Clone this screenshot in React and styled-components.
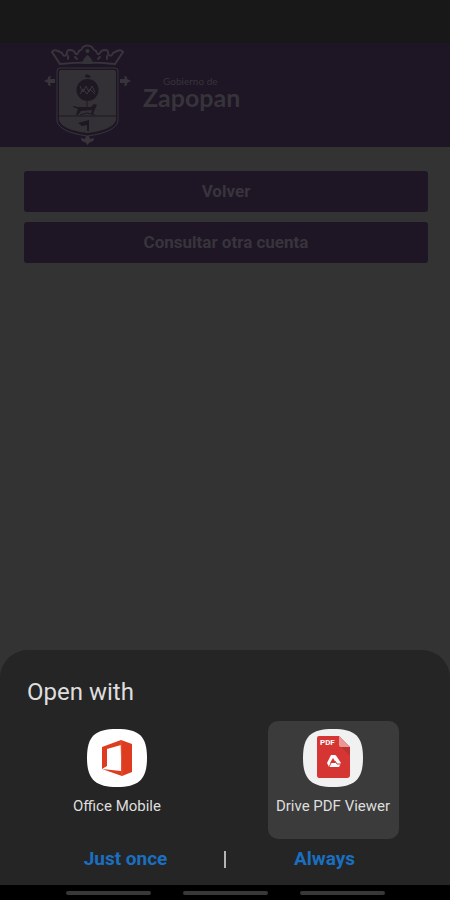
import React from 'react';
import styled, { createGlobalStyle } from 'styled-components'

const GlobalStyle = createGlobalStyle`
* {
  box-sizing: border-box;
}
body {
  margin: 0;
  background: #333333;
  font-family: Roboto, sans-serif;
}
button {
  margin: 0;
  padding: 0;
  border: 0;
  background: none;
  font-family: inherit;
  cursor: pointer;
}
`

const Crest = () => (
  <svg width="88" height="102" viewBox="0 0 88 102" fill="none" aria-hidden="true">
    {/* crown */}
    <g stroke="#38343c" strokeWidth="2" strokeLinejoin="round" strokeLinecap="round">
      <path d="M8 8 L16 20 M79 8 L71 20" />
      <path d="M8 8 Q10 5 14 7 L18 9 Q20 14 23 10 Q22 6 26 6 Q30 6 31 9 Q33 12 35 7" />
      <path d="M79 8 Q77 5 73 7 L69 9 Q67 14 64 10 Q65 6 61 6 Q57 6 56 9 Q54 12 52 7" />
      <path d="M35 7 Q38 6 39 3 Q43.500 0 48 3 Q49 6 52 7" />
      <path d="M16 20 Q43.500 17 71 20" />
      <path d="M24 12 V15 M63 12 V15 M31 13 L33 15 M56 13 L54 15" />
    </g>
    <path d="M38 20 Q39 14 43.500 11 Q48 14 49 20Z" fill="#343139" />
    <circle cx="43.500" cy="7" r="2" fill="#38343c" />
    {/* shield */}
    <path d="M16 24 H71 Q74 24 74 27 V77 Q72 88 43.500 92 Q15 88 13 77 V27 Q13 24 16 24Z" stroke="#37333b" strokeWidth="1" />
    <path d="M17 26 H70 Q72 26 72 28 V76 Q69 86 43.500 89 Q18 86 15 76 V28 Q15 26 17 26Z" fill="#333136" />
    <path d="M15 72 H72" stroke="#1e1823" strokeWidth="1" />
    <path d="M41 33 L42 30 L47 32 L45 34Z" fill="#1e1823" />
    <circle cx="43.500" cy="46" r="11" fill="#1e1823" />
    <g stroke="#39363c" strokeWidth="1">
      <path d="M36 42 L39 48 L42 42 L45 48 L48 42 L51 48" />
      <path d="M36 50 L39 45 L43 50 L46 45 L51 50" />
    </g>
    {/* hound and pennant */}
    <path d="M29 62 L34 63 H47 L50 60 L53 61 L51 65 L49 70 H47 L48 66 L37 67 L34 71 H32 L34 65 L29 63Z" fill="#1e1823" />
    <path d="M43 57 V63 M36 71 L43 69 L51 71" stroke="#1e1823" strokeWidth="1" />
    <path d="M34 79 L45 76 V87 H43 V81 L38 82Z" fill="#1e1823" />
    {/* side and bottom finials */}
    <g fill="#38343c">
      <path d="M0 37 L4 35 Q3 32 7 32 L6 35 L11 35 V39 L6 39 L7 42 Q3 42 4 39Z" />
      <path d="M87 37 L83 35 Q84 32 80 32 L81 35 L76 35 V39 L81 39 L80 42 Q84 42 83 39Z" />
      <path d="M43.500 101 L41 98 Q37 98 37 94 L41 95 L42 92 H45 L46 95 L50 94 Q50 98 46 98Z" />
    </g>
  </svg>
)

const OfficeIcon = () => (
  <svg width="62" height="60" viewBox="0 0 62 60" aria-hidden="true">
    <path d="M31 1 C53 1 61 8 61 30 C61 51 53 59 31 59 C9 59 1 51 1 30 C1 8 9 1 31 1Z" fill="#ffffff" />
    <path d="M16 19 L35 12 L46 16 V44 L36 48 L16 41 L35 43 V17 L21 21 V38 L16 41Z" fill="#dd3c20" />
    <path d="M35 12 L36 48" stroke="#e9573c" strokeWidth="1" />
  </svg>
)

const PdfIcon = () => (
  <svg width="62" height="60" viewBox="0 0 62 60" aria-hidden="true">
    <path d="M31 1 C53 1 61 8 61 30 C61 51 53 59 31 59 C9 59 1 51 1 30 C1 8 9 1 31 1Z" fill="#f1f1f1" />
    <path d="M17 8 H37 L48 19 V47 Q48 50 45 50 H17 Q15 50 15 47 V10 Q15 8 17 8Z" fill="#d63633" />
    <path d="M37 8 L48 19 H39 Q37 19 37 17Z" fill="#e99795" />
    <path d="M39 19 H48 V28Z" fill="#b93330" />
    <text x="18" y="17" fill="#ffffff" fontFamily="Roboto, sans-serif" fontSize="8" fontWeight="700">PDF</text>
    <path d="M29 27 H33 Q34 27 35 29 L39 35 L37 39 H27 L25 35Z" fill="#ffffff" />
    <path d="M31 30 L34 35 H28Z" fill="#d63633" />
    <path d="M33 33 L35 36 H39 M29 35 L27 39" stroke="#d63633" strokeWidth="1" fill="none" />
  </svg>
)

export default function App() {
  return (
    <Screen>
      <GlobalStyle />
      <StatusBar />
      <Header>
        <Crest />
        <Brand>
          <small>Gobierno de</small>
          <strong>Zapopan</strong>
        </Brand>
      </Header>
      <Content>
        <PageButton type="button">Volver</PageButton>
        <PageButton type="button">Consultar otra cuenta</PageButton>
      </Content>
      <Sheet role="dialog" aria-labelledby="sheet-title">
        <Title id="sheet-title">Open with</Title>
        <Options>
          <Option type="button">
            <OfficeIcon />
            Office Mobile
          </Option>
          <Option type="button" $selected aria-pressed="true">
            <PdfIcon />
            Drive PDF Viewer
          </Option>
        </Options>
        <Actions>
          <Action type="button">Just once</Action>
          <Divider />
          <Action type="button">Always</Action>
        </Actions>
      </Sheet>
      <NavBar>
        <Handle />
        <Handle />
        <Handle />
      </NavBar>
    </Screen>
  )
}

const Screen = styled.div`
display: flex;
flex-direction: column;
min-height: 100vh;
background: #333333;
`

const StatusBar = styled.div`
height: 43px;
background: #181818;
`

const Header = styled.header`
display: flex;
align-items: center;
gap: 11px;
height: 104px;
padding: 0 44px;
background: #1e1624;
`

const Brand = styled.div`
display: flex;
flex-direction: column;
padding-bottom: 8px;
color: #37333b;
font-family: Lato, sans-serif;
small{
  padding-left: 20px;
  font-size: 10px;
  line-height: 12px;
}
strong{
  font-size: 25px;
  font-weight: 700;
  line-height: 20px;
}
`

const Content = styled.main`
display: flex;
flex: 1;
flex-direction: column;
gap: 10px;
padding: 24px 22px 24px 24px;
`

const PageButton = styled.button`
height: 41px;
padding-bottom: 2px;
border-radius: 3px;
background: #1e1624;
color: #38343c;
font-size: 17px;
font-weight: 700;
`

const Sheet = styled.section`
padding: 28px 0 12px;
border-radius: 28px 28px 0 0;
background: #252525;
`

const Title = styled.h1`
margin: 0 27px 15px;
color: #dedede;
font-size: 24px;
font-weight: 400;
line-height: 28px;
`

const Options = styled.div`
display: grid;
grid-template-columns: 1fr 1fr;
justify-items: center;
padding: 0 9px;
`

const Option = styled.button`
display: flex;
flex-direction: column;
align-items: center;
gap: 8px;
width: 131px;
height: 118px;
padding-top: 7px;
border-radius: 10px;
background: ${props => props.$selected ? '#3b3b3b' : 'transparent'};
color: #dedede;
font-size: 15px;
line-height: 20px;
`

const Actions = styled.div`
display: grid;
grid-template-columns: 1fr 2px 1fr;
align-items: center;
padding: 6px 27px 0;
`

const Action = styled.button`
color: #1a6fc0;
font-size: 19px;
font-weight: 700;
line-height: 28px;
`

const Divider = styled.span`
height: 17px;
background: #b4b4b4;
`

const NavBar = styled.nav`
display: flex;
justify-content: center;
gap: 32px;
height: 15px;
padding-top: 6px;
background: #000000;
`

const Handle = styled.span`
width: 85px;
height: 4px;
border-radius: 2px;
background: #383838;
`
